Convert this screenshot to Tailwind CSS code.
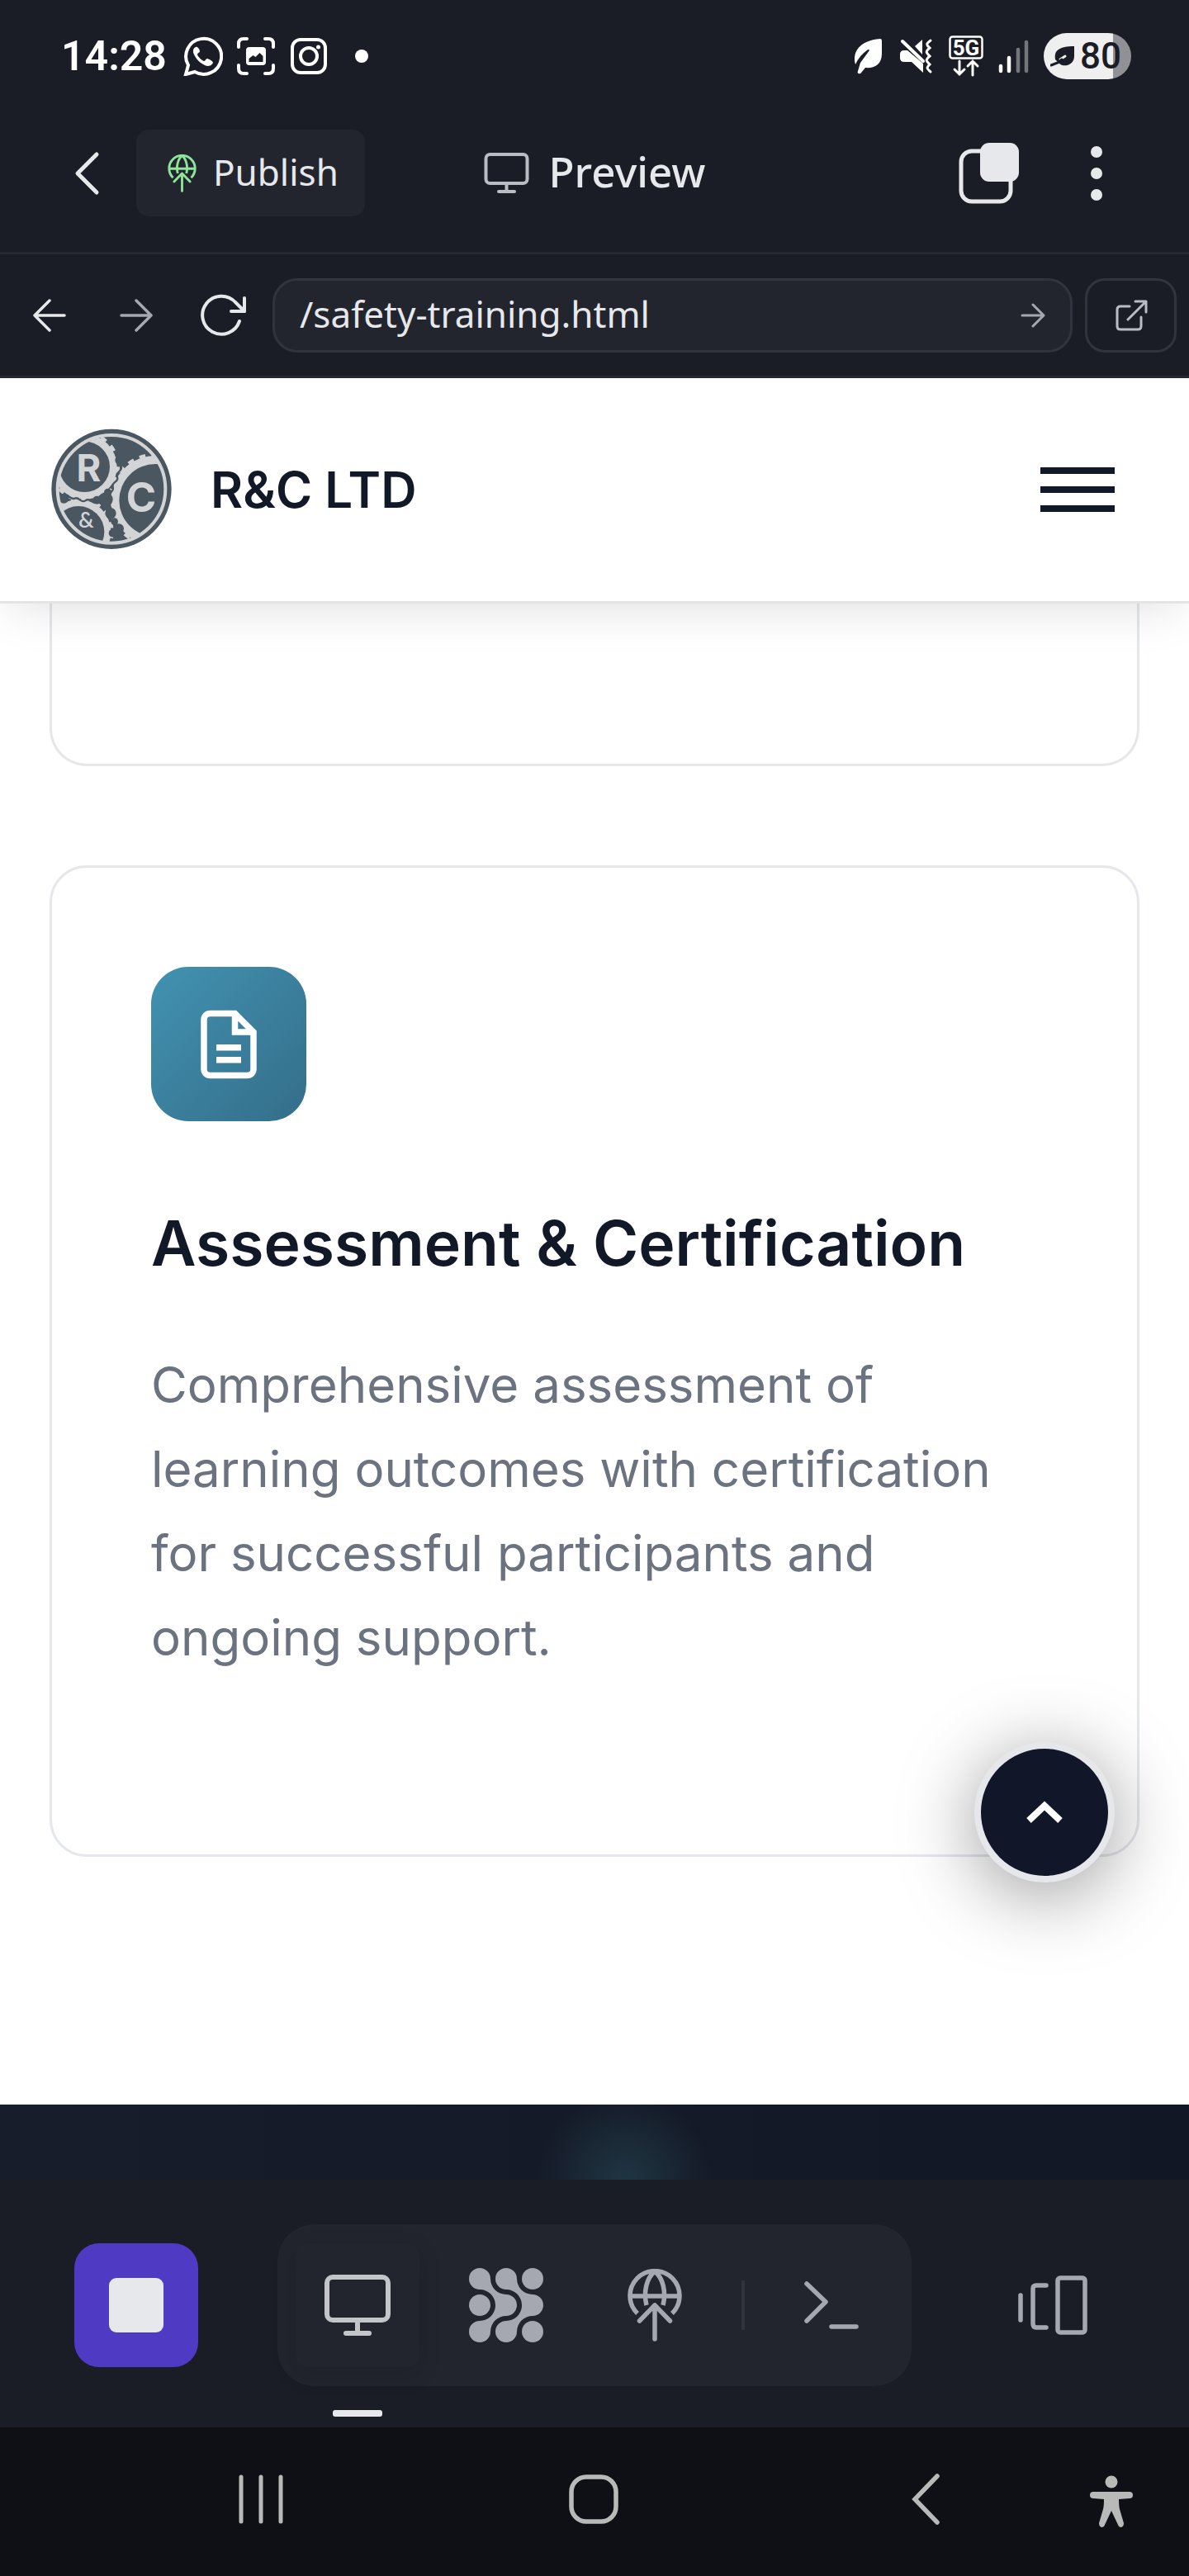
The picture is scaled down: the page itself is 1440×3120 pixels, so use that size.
<!DOCTYPE html>
<html lang="en">
<head>
<meta charset="utf-8">
<meta name="viewport" content="width=device-width, initial-scale=1">
<title>Preview</title>
<script src="https://cdn.jsdelivr.net/npm/@tailwindcss/browser@4"></script>
</head>
<body class="flex min-h-screen flex-col bg-[#1a1d25] font-['Noto_Sans',sans-serif] text-[#e6e8ec]">

<!-- System status bar -->
<div class="flex h-[114px] shrink-0 items-center justify-between pt-[22px] pr-[70px] pl-[74px] font-['Roboto',sans-serif] text-white">
  <div class="flex items-center gap-4">
    <time class="mr-1 text-[50px] leading-none font-semibold">14:28</time>
    <svg class="h-12 w-12" viewBox="0 0 48 48" fill="none" aria-label="WhatsApp"><path d="M3 46 6 35A21.500 21.500 0 1 1 14 43Z" stroke="#fff" stroke-width="4"/><path d="M15 13c-3 1-4 5-2 9 3 6 7 10 13 13 4 2 8 1 10-3 0-2-6-5-7-5-2 0-2 3-4 3-3-1-7-5-8-8 0-2 3-2 3-4 0-1-2-6-5-5Z" fill="#fff"/></svg>
    <svg class="h-12 w-12" viewBox="0 0 48 48" fill="none" aria-label="Screen capture"><path d="M3 13V9q0-6 6-6h4M35 3h4q6 0 6 6v4M45 35v4q0 6-6 6h-4M13 45H9q-6 0-6-6v-4" stroke="#fff" stroke-width="4" stroke-linecap="round"/><rect x="12" y="13" width="24" height="22" rx="4" fill="#fff"/><path d="M15.500 31v-4l5-4 3 2 5-5 4 4v7Z" fill="#1a1d25"/></svg>
    <svg class="h-12 w-12" viewBox="0 0 48 48" fill="none" stroke="#fff" stroke-width="4" aria-label="Instagram"><rect x="4" y="4" width="40" height="40" rx="10"/><circle cx="24" cy="24" r="10"/><circle cx="35.500" cy="13" r="2.500" fill="#fff" stroke="none"/></svg>
    <span class="ml-4 h-4 w-4 rounded-full bg-white"></span>
  </div>
  <div class="flex items-center gap-4">
    <svg class="h-12 w-10" viewBox="0 0 40 48" aria-label="Power saving"><path d="M4 34C0 20 8 5 34 3q2 0 2 3v15c0 14-10 18-20 17L11 44q-1 2-3 1-2 0-1-3l3-10 11-15q-1-2-3 0-9 6-14 17Z" fill="#fff"/></svg>
    <svg class="h-12 w-11" viewBox="0 0 44 48" fill="none" aria-label="Vibrate"><path d="M2 22q0-5 5-5h4L30 33v11L16 31H7q-5 0-5-5ZM20 12l9-8v18Z" fill="#fff"/><path d="m5 6 25 24" stroke="#fff" stroke-width="4" stroke-linecap="round"/><path d="M39 5c-7 5-4 6-1 9-6 5-4 6 0 10-6 5-4 6 0 10-5 5-3 5 1 9" stroke="#fff" stroke-width="3" stroke-linecap="round"/></svg>
    <svg class="h-[52px] w-[44px]" viewBox="0 0 44 52" fill="none" aria-label="5G"><rect x="2.500" y="2.500" width="39" height="26" rx="3" stroke="#fff" stroke-width="2.500"/><text x="22" y="25" text-anchor="middle" font-family="Roboto" font-size="26" font-weight="700" fill="#fff">5G</text><path d="M14 32v16M8 42l6 6 6-6M30 49V32M24 38l6-6 6 6" stroke="#fff" stroke-width="3" stroke-linecap="round"/></svg>
    <svg class="h-12 w-10" viewBox="0 0 40 48" stroke-width="4.500" stroke-linecap="round" aria-label="Signal"><path d="M4 36v6M14 26v16" stroke="#fff"/><path d="M25 16v26M35 7v35" stroke="#75767b"/></svg>
    <div class="flex h-14 w-[106px] items-center rounded-full bg-linear-to-r from-[#efefef] from-79% to-[#909195] to-79% pl-2 text-[#1a1d25]">
      <svg class="h-7 w-9" viewBox="0 0 36 28" fill="none" aria-hidden="true"><path d="M6 18C4 7 11 2 29 2v12c0 11-13 14-18 9Z" fill="#1a1d25"/><path d="m12 18 6-4" stroke="#efefef" stroke-width="3" stroke-linecap="round"/><path d="m1 25 8-3 5-4" stroke="#1a1d25" stroke-width="3" stroke-linecap="round"/></svg>
      <span class="text-[44px] leading-none font-medium">80</span>
    </div>
  </div>
</div>

<!-- Title bar -->
<header class="grid h-[194px] shrink-0 grid-cols-[1fr_auto_1fr] items-center border-b-3 border-[#252830] px-[75px]">
  <div class="flex items-center">
    <button type="button" aria-label="Back" class="flex h-[105px] w-[90px] items-center justify-start pl-[14px]">
      <svg class="h-[54px] w-8" viewBox="0 0 32 54" fill="none" stroke="#e6e8ec" stroke-width="5" stroke-linecap="round" stroke-linejoin="round"><path d="M28 4 5 27l23 23"/></svg>
    </button>
    <button type="button" class="flex h-[105px] items-center gap-[20px] rounded-[15px] bg-[#22252e] pr-[32px] pl-[38px] text-[44px] leading-none">
      <svg class="h-[46px] w-[35px]" viewBox="0 0 66 88" fill="none" stroke="#8ee59a" stroke-width="5.500"><path d="M12 54a30 30 0 1 1 42 0M3 33h60M33 3C23 11 19 28 23 44M33 3c10 8 14 25 10 41"/><path d="M33 85V45M14.500 63 33 44l18.500 19" stroke-linecap="round" stroke-linejoin="round"/></svg>
      <span class="pb-1">Publish</span>
    </button>
  </div>
  <h1 class="flex items-center gap-[24px] text-[51px] leading-none font-medium">
    <svg class="h-[50px] w-[55px]" viewBox="0 0 55 50" fill="none" stroke="#b9bcc2" stroke-width="4"><rect x="2.500" y="2" width="50" height="35" rx="5"/><path d="M27.500 38v8"/><path d="M18 47h19" stroke-linecap="round"/></svg>
    <span class="pb-1">Preview</span>
  </h1>
  <div class="flex items-center justify-end gap-[48px]">
    <button type="button" aria-label="Tabs" class="flex h-[90px] w-[90px] items-center justify-center">
      <svg class="h-[76px] w-[76px]" viewBox="0 0 76 76"><rect x="4" y="11" width="60" height="61" rx="13" fill="none" stroke="#e6e8ec" stroke-width="5"/><rect x="27" y="1" width="47" height="47" rx="11" fill="#e6e8ec"/></svg>
    </button>
    <button type="button" aria-label="More options" class="flex h-[90px] w-[74px] items-center justify-center">
      <svg class="h-[68px] w-4" viewBox="0 0 16 68" fill="#e6e8ec"><circle cx="8" cy="8" r="7"/><circle cx="8" cy="34" r="7"/><circle cx="8" cy="60" r="7"/></svg>
    </button>
  </div>
</header>

<!-- Address bar -->
<nav class="flex h-[150px] shrink-0 items-center gap-[15px] border-b-3 border-[#252830] px-[15px]" aria-label="Page navigation">
  <button type="button" aria-label="Go back" class="flex h-[90px] w-[90px] shrink-0 items-center justify-center">
    <svg class="h-10 w-10" viewBox="0 0 40 40" fill="none" stroke="#e6e8ec" stroke-width="3.500" stroke-linecap="round" stroke-linejoin="round"><path d="M38 20H2M20 2 2 20l18 18"/></svg>
  </button>
  <button type="button" aria-label="Go forward" class="flex h-[90px] w-[90px] shrink-0 items-center justify-center">
    <svg class="h-10 w-10" viewBox="0 0 40 40" fill="none" stroke="#a5a8b0" stroke-width="3.500" stroke-linecap="round" stroke-linejoin="round"><path d="M2 20h36M20 2l18 18-18 18"/></svg>
  </button>
  <button type="button" aria-label="Reload" class="flex h-[90px] w-[90px] shrink-0 items-center justify-center">
    <svg class="h-[54px] w-[58px]" viewBox="0 0 58 54" fill="none" stroke="#e6e8ec" stroke-width="4" stroke-linecap="round" stroke-linejoin="round"><path d="M49 34A23 23 0 1 1 44 11L55 22"/><path d="M55 6v16H39"/></svg>
  </button>
  <form class="flex h-[90px] min-w-0 flex-1 items-center rounded-[30px] border-3 border-[#31343e] bg-[#22252e] pr-[30px] pl-[30px]">
    <input type="text" aria-label="Page path" value="/safety-training.html" class="min-w-0 flex-1 bg-transparent pb-1 text-[44px] outline-none">
    <button type="button" aria-label="Go">
      <svg class="h-[30px] w-[30px]" viewBox="0 0 30 30" fill="none" stroke="#a5a8b0" stroke-width="3" stroke-linecap="round" stroke-linejoin="round"><path d="M2 15h26M15 2l13 13-13 13"/></svg>
    </button>
  </form>
  <button type="button" aria-label="Open in new tab" class="flex h-[90px] w-[111px] shrink-0 items-center justify-center rounded-[24px] border-3 border-[#31343e]">
    <svg class="h-10 w-10" viewBox="0 0 40 40" fill="none" stroke="#b9bcc2" stroke-width="3" stroke-linecap="round" stroke-linejoin="round"><path d="M18 9H7q-4 0-4 4v20q0 4 4 4h21q4 0 4-4V22M25 3h13v13M38 3 16 25"/></svg>
  </button>
</nav>

<!-- Previewed website -->
<main class="relative flex flex-1 flex-col overflow-hidden bg-white font-['Inter',sans-serif] text-[#111827]">
  <div class="relative z-10 flex h-[273px] shrink-0 items-center justify-between border-b-3 border-[#e4e4e5] bg-white px-[60px] shadow-[0_15px_56px_-11px_rgba(0,0,0,0.13)]">
    <a href="#" class="flex items-center gap-[45px] text-[60px] leading-none font-semibold">
      <svg class="h-[150px] w-[150px]" viewBox="60 51 450 450" aria-hidden="true">
        <defs><clipPath id="inner"><circle cx="285" cy="274" r="192"/></clipPath></defs>
        <circle cx="285" cy="274" r="218" fill="#4a5760"/>
        <g clip-path="url(#inner)">
          <g fill="#d3d4d6" stroke="#d3d4d6" stroke-width="20" stroke-dasharray="22 22">
            <circle cx="187" cy="193" r="118"/>
            <circle cx="445" cy="315" r="162"/>
            <circle cx="165" cy="430" r="118"/>
          </g>
          <path d="M320 190c8 20-22 20-14 40s-22 16-16 36-14 14-12 34M112 302c14-16 24 14 40 6s22 20 38 8 24 10 40-4" fill="none" stroke="#4a5760" stroke-width="7"/>
          <g fill="#4a5760"><circle cx="264" cy="312" r="26"/><circle cx="232" cy="314" r="15"/><circle cx="272" cy="286" r="14"/><circle cx="282" cy="362" r="20"/><circle cx="296" cy="392" r="13"/><circle cx="312" cy="418" r="18"/><circle cx="290" cy="434" r="15"/><circle cx="112" cy="308" r="18"/><circle cx="318" cy="168" r="20"/><path d="M254 320h26l10 40-18 14Z"/></g>
          <g fill="#4a5760"><circle cx="187" cy="193" r="92"/><circle cx="445" cy="315" r="132"/><circle cx="165" cy="430" r="94"/></g>
        </g>
        <circle cx="285" cy="274" r="196" fill="none" stroke="#d3d4d6" stroke-width="12"/>
        <g fill="#d3d4d6" text-anchor="middle"><text x="202" y="247" font-family="Inter" font-size="136" font-weight="700">R</text><text x="393" y="356" font-family="Inter" font-size="148" font-weight="700">C</text><text x="193" y="414" font-family="Lato" font-size="78">&amp;</text></g>
      </svg>
      <span>R&amp;C LTD</span>
    </a>
    <button type="button" aria-label="Open menu" class="flex flex-col gap-[15px] p-[30px]">
      <span class="h-2 w-[90px] bg-[#111827]"></span>
      <span class="h-2 w-[90px] bg-[#111827]"></span>
      <span class="h-2 w-[90px] bg-[#111827]"></span>
    </button>
  </div>

  <section class="flex flex-col gap-[120px] px-[60px] pb-[300px]">
    <div class="h-[197px] rounded-b-[45px] border-3 border-t-0 border-[#e5e7eb]"></div>
    <article class="rounded-[45px] border-3 border-[#e5e7eb] px-[120px] pt-[120px] pb-[210px]">
      <div class="flex h-[187px] w-[188px] items-center justify-center rounded-[45px] bg-linear-to-br from-[#4292b1] to-[#346e8a]">
        <svg class="h-[90px] w-[90px]" viewBox="0 0 24 24" fill="none" stroke="#fff" stroke-width="2"><path d="M14 2H6a2 2 0 0 0-2 2v16a2 2 0 0 0 2 2h12a2 2 0 0 0 2-2V8zM14 2v6h6M8 13h8M8 17h8"/></svg>
      </div>
      <h2 class="mt-[88px] text-[75px] leading-[120px] font-semibold">Assessment &amp; Certification</h2>
      <p class="mt-[60px] mb-[2px] text-[60px] leading-[102px] text-[#6b7280]">Comprehensive assessment of learning outcomes with certification for successful participants and ongoing support.</p>
    </article>
  </section>

  <section class="min-h-[91px] flex-1 bg-[radial-gradient(circle_at_757px_91px,#1f3542_0,#1b2a37_45px,#1b2a3700_105px),linear-gradient(to_right,#171d2b,#121725)]"></section>

  <button type="button" aria-label="Back to top" class="absolute right-[90px] bottom-[360px] flex h-[170px] w-[170px] items-center justify-center rounded-full border-8 border-[#e5e7eb] bg-[#111728] shadow-[0_15px_94px_rgba(0,0,0,0.4)]">
    <svg class="h-[28px] w-[44px]" viewBox="0 0 44 28" fill="none" stroke="#fff" stroke-width="8"><path d="M3 24 22 6l19 18"/></svg>
  </button>
</main>

<!-- Tool bar -->
<nav class="flex h-[300px] shrink-0 items-center justify-between px-[90px] pt-[3px]" aria-label="Tools">
  <button type="button" aria-label="Stop" class="flex h-[150px] w-[150px] items-center justify-center rounded-[30px] bg-[#4f3ac4]">
    <span class="h-[66px] w-[66px] rounded-[9px] bg-[#e6e8ec]"></span>
  </button>
  <div class="flex h-[196px] items-center gap-[30px] rounded-[45px] bg-[#22252e] px-[22px]">
    <button type="button" aria-label="Preview" class="relative flex h-[150px] w-[150px] items-center justify-center rounded-[15px] bg-[#22252e] shadow-[0_8px_30px_rgba(0,0,0,0.12)]">
      <svg class="h-[74px] w-[80px]" viewBox="0 0 80 74" fill="none" stroke="#c3c5c9" stroke-width="6"><rect x="3" y="3" width="74" height="52" rx="7"/><path d="M40 57v12"/><path d="M26 71h28" stroke-linecap="round"/></svg>
      <span class="absolute -bottom-[60px] left-[45px] h-2 w-[60px] rounded-[3px] bg-[#e6e8ec]"></span>
    </button>
    <button type="button" aria-label="Agent" class="flex h-[150px] w-[150px] items-center justify-center">
      <svg class="h-[90px] w-[90px]" viewBox="0 0 90 90" fill="#a5a8b0"><path d="M26 13A19 19 0 0 0 45 32 13 13 0 0 1 45 58 19 19 0 0 0 26 77 13 13 0 1 1 13 64 19 19 0 0 0 13 26 13 13 0 1 1 26 13ZM58 13A19 19 0 0 0 77 32 13 13 0 0 1 77 58 19 19 0 0 0 58 77 13 13 0 1 1 45 64 19 19 0 0 0 45 26 13 13 0 1 1 58 13Z"/><circle cx="77" cy="13" r="13"/><circle cx="13" cy="45" r="13"/><circle cx="77" cy="77" r="13"/></svg>
    </button>
    <button type="button" aria-label="Publishing" class="flex h-[150px] w-[150px] items-center justify-center">
      <svg class="h-[88px] w-[66px]" viewBox="0 0 66 88" fill="none" stroke="#a5a8b0" stroke-width="5.500"><path d="M12 54a30 30 0 1 1 42 0M3 33h60M33 3C23 11 19 28 23 44M33 3c10 8 14 25 10 41"/><path d="M33 85V45M14.500 63 33 44l18.500 19" stroke-linecap="round" stroke-linejoin="round"/></svg>
    </button>
    <span class="h-[60px] w-1 bg-[#31343e]"></span>
    <button type="button" aria-label="Shell" class="flex h-[150px] w-[150px] items-center justify-center">
      <svg class="h-[60px] w-[66px]" viewBox="0 0 66 60" fill="none" stroke="#a5a8b0" stroke-width="5.500" stroke-linecap="round" stroke-linejoin="round"><path d="M3 4 26 26 3 49M33 56h30"/></svg>
    </button>
  </div>
  <button type="button" aria-label="Switch panels" class="flex h-[150px] w-[150px] items-center justify-center">
    <svg class="h-[74px] w-[84px]" viewBox="0 0 84 74" fill="none" stroke="#a5a8b0" stroke-width="5.500" stroke-linecap="round"><path d="M3 25v30M34 13H22q-4 0-4 4v42q0 5 4 5h12"/><rect x="48" y="4" width="33" height="66" rx="3"/></svg>
  </button>
</nav>

<!-- System navigation -->
<nav class="flex h-[180px] shrink-0 items-center bg-[#0f1015] pr-[34px] pb-[6px] pl-[256px]" aria-label="System">
  <div class="flex flex-1 justify-between">
    <button type="button" aria-label="Recent apps" class="flex h-[120px] w-[120px] items-center justify-center">
      <svg class="h-[60px] w-[54px]" viewBox="0 0 54 60" stroke="#b9b9b9" stroke-width="5" stroke-linecap="round"><path d="M3 3v54M27 3v54M51 3v54"/></svg>
    </button>
    <button type="button" aria-label="Home" class="flex h-[120px] w-[120px] items-center justify-center">
      <svg class="h-[60px] w-[60px]" viewBox="0 0 60 60" fill="none" stroke="#b9b9b9" stroke-width="5.500"><rect x="3" y="3" width="54" height="54" rx="18"/></svg>
    </button>
    <button type="button" aria-label="Back" class="flex h-[120px] w-[120px] items-center justify-center">
      <svg class="h-[62px] w-9" viewBox="0 0 36 62" fill="none" stroke="#b9b9b9" stroke-width="5.500" stroke-linecap="round"><path d="M32 3 5 31l27 28"/></svg>
    </button>
  </div>
  <button type="button" aria-label="Accessibility" class="ml-[105px] flex h-[120px] w-[120px] items-center justify-center pt-[6px]">
    <svg class="h-[64px] w-[52px]" viewBox="0 0 52 64" fill="#b9b9b9"><circle cx="26" cy="8" r="7.500"/><path d="M4 20h44q4 0 4 4t-4 4l-13 1q0 8 1 12l5 17q0 4-3 5-3 0-4-3L26 43l-8 17q-1 3-4 3-3-1-3-5l5-17q1-4 1-12L4 28q-4 0-4-4t4-4Z"/></svg>
  </button>
</nav>
</body>
</html>
